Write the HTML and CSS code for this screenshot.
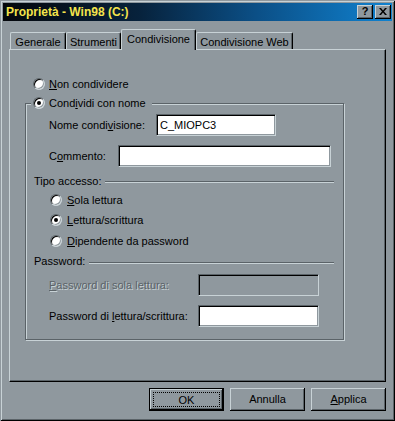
FILE: index.html
```html
<!DOCTYPE html>
<html lang="it">
<head>
<meta charset="utf-8">
<title>Proprietà - Win98 (C:)</title>
<link rel="stylesheet" href="styles.css">
</head>
<body>
<div class="window">
  <div class="titlebar">
    <span class="title">Proprietà - Win98 (C:)</span>
    <div class="tb-buttons">
      <div class="tb-btn help">?</div>
      <div class="tb-btn close">
        <svg width="8" height="7" viewBox="0 0 8 7"><path d="M0 0h2l2 2.5L6 0h2L5 3.5 8 7H6L4 4.5 2 7H0l3-3.5z" fill="#000"/></svg>
      </div>
    </div>
  </div>

  <div class="tabs">
    <div class="tab t1">Generale</div>
    <div class="tab t2">Strumenti</div>
    <div class="tab t3 active">Condivisione</div>
    <div class="tab t4">Condivisione Web</div>
  </div>

  <div class="panel">
    <div class="opt top-opt"><span class="radio"></span><span><u>N</u>on condividere</span></div>

    <div class="group">
      <div class="legend"><span class="radio checked"></span><span>Cond<u>i</u>vidi con nome</span></div>

      <div class="row r-name">
        <span class="lbl w-name">Nome condi<u>v</u>isione:</span>
        <div class="edit e-name">C_MIOPC3</div>
      </div>

      <div class="row r-comm">
        <span class="lbl w-comm">C<u>o</u>mmento:</span>
        <div class="edit e-comm"></div>
      </div>

      <div class="sep s-tipo"><span>Tipo accesso:</span><span class="line"></span></div>

      <div class="ropt ro1"><span class="radio"></span><span><u>S</u>ola lettura</span></div>
      <div class="ropt"><span class="radio checked"></span><span><u>L</u>ettura/scrittura</span></div>
      <div class="ropt ro3"><span class="radio"></span><span><u>D</u>ipendente da password</span></div>

      <div class="sep s-pwd"><span>Password:</span><span class="line"></span></div>

      <div class="row r-p1">
        <span class="lbl w-pwd dis"><u>P</u>assword di sola lettura:</span>
        <div class="edit e-pwd disabled"></div>
      </div>

      <div class="row r-p2">
        <span class="lbl w-pwd">Password di <u>l</u>ettura/scrittura:</span>
        <div class="edit e-pwd"></div>
      </div>
    </div>
  </div>

  <div class="buttons">
    <div class="btn default"><span class="focus">OK</span></div>
    <div class="btn"><span class="cap">Annulla</span></div>
    <div class="btn"><span class="cap"><u>A</u>pplica</span></div>
  </div>
</div>
</body>
</html>
```

FILE: styles.css
```css
* { box-sizing: border-box; }

html, body {
  margin: 0;
  background: #8f989e;
}

body {
  font-family: "Liberation Sans", Arial, sans-serif;
  font-size: 11px;
  color: #000;
}

u { text-decoration: underline; text-underline-offset: 1px; }

.window {
  width: 395px;
  height: 421px;
  padding: 3px;
  background: #8f989e;
  box-shadow:
    inset 1px 1px 0 #8f989e,
    inset -1px -1px 0 #000,
    inset 2px 2px 0 #c8d2d6,
    inset -2px -2px 0 #5b6368;
}

/* Title bar */
.titlebar {
  height: 18px;
  display: flex;
  align-items: center;
  justify-content: space-between;
  padding: 0 1px 0 3px;
  background: linear-gradient(to right, #04070b 0%, #07223c 35%, #0b4f86 65%, #1082d0 100%);
}

.title {
  color: #f4e44c;
  font-weight: bold;
  font-size: 12px;
  letter-spacing: 0;
}

.tb-buttons {
  display: flex;
  gap: 2px;
}

.tb-btn {
  width: 16px;
  height: 14px;
  background: #8f989e;
  display: flex;
  align-items: center;
  justify-content: center;
  box-shadow:
    inset -1px -1px 0 #000,
    inset 1px 1px 0 #c8d2d6,
    inset -2px -2px 0 #5b6368;
  font-weight: bold;
  font-size: 11px;
  line-height: 1;
}

.tb-btn.help { padding-bottom: 1px; }
.tb-btn.close { padding-bottom: 1px; }

/* Tabs */
.tabs {
  height: 28px;
  display: flex;
  align-items: flex-end;
  padding-left: 7px;
}

.tab {
  height: 17px;
  display: flex;
  align-items: center;
  justify-content: center;
  border-top: 1px solid #c8d2d6;
  border-left: 1px solid #c8d2d6;
  border-right: 1px solid #000;
  box-shadow: inset -1px 0 0 #5b6368;
  border-radius: 2px 2px 0 0;
  background: #8f989e;
  padding-top: 1px;
}

.t1 { width: 56px; }
.t2 { width: 55px; }
.t3 { width: 75px; }
.t4 { width: 97px; }

.tab.active {
  height: 21px;
  margin-bottom: -1px;
  padding-top: 0;
  padding-bottom: 3px;
  position: relative;
  z-index: 1;
}

/* Panel */
.panel {
  margin-left: 6px;
  width: 377px;
  height: 333px;
  border-top: 1px solid #c8d2d6;
  border-left: 1px solid #c8d2d6;
  border-right: 1px solid #000;
  border-bottom: 1px solid #000;
  box-shadow: inset -1px -1px 0 #5b6368;
  padding-top: 27px;
  display: flex;
  flex-direction: column;
  align-items: flex-start;
}

.opt {
  height: 14px;
  display: flex;
  align-items: center;
  gap: 4px;
}

.top-opt { padding-left: 23px; }

/* Radio */
.radio {
  width: 12px;
  height: 12px;
  flex: none;
  border-radius: 50%;
  background: #fff;
  border: 1px solid;
  border-color: #5b6368 #c8d2d6 #c8d2d6 #5b6368;
  box-shadow: inset 1px 1px 0 #000, inset -1px -1px 0 #8f989e;
  display: flex;
  align-items: center;
  justify-content: center;
}

.radio.checked::after {
  content: "";
  width: 4px;
  height: 4px;
  border-radius: 50%;
  background: #000;
}

/* Group box */
.group {
  margin: 12px 0 0 15px;
  width: 319px;
  height: 237px;
  border: 1px solid #5b6368;
  box-shadow: inset 1px 1px 0 #c8d2d6, 1px 1px 0 #c8d2d6;
  display: flex;
  flex-direction: column;
  align-items: flex-start;
}

.legend {
  margin: -8px 0 0 5px;
  height: 14px;
  padding: 0 6px 0 2px;
  background: #8f989e;
  display: flex;
  align-items: center;
  gap: 4px;
}

.row {
  height: 22px;
  display: flex;
  align-items: center;
  padding-left: 23px;
}

.r-name { margin-top: 4px; }
.r-comm { margin-top: 9px; }
.r-p1 { margin-top: 6px; }
.r-p2 { margin-top: 9px; }

.lbl { flex: none; }
.w-name { width: 107px; }
.w-comm { width: 69px; }
.w-pwd { width: 149px; }

.dis {
  color: #5b6368;
  text-shadow: 1px 1px 0 #c8d2d6;
}

.edit {
  height: 22px;
  background: #fff;
  border-top: 1px solid #5b6368;
  border-left: 1px solid #5b6368;
  border-right: 1px solid #c8d2d6;
  border-bottom: 1px solid #c8d2d6;
  box-shadow: inset 1px 1px 0 #000, inset -1px -1px 0 #8f989e;
  padding: 0 2px 0 3px;
  display: flex;
  align-items: center;
}

.e-name { width: 120px; }
.e-comm { width: 213px; }
.e-pwd { width: 121px; }
.edit.disabled { background: #8f989e; }

/* Separators */
.sep {
  align-self: stretch;
  height: 14px;
  display: flex;
  align-items: center;
  padding: 0 9px 0 8px;
  gap: 4px;
}

.sep .line {
  flex: 1;
  align-self: flex-start;
  margin-top: 7px;
  height: 2px;
  border-top: 1px solid #5b6368;
  border-bottom: 1px solid #c8d2d6;
}

.s-tipo { margin-top: 7px; }
.s-pwd { margin-top: 3px; }
.s-pwd .line { margin-top: 8px; }

.ropt {
  height: 20px;
  display: flex;
  align-items: center;
  gap: 5px;
  padding-left: 24px;
}

.ro1 { margin-top: 2px; }
.ro3 { height: 21px; }

/* Buttons */
.buttons {
  margin: 6px 0 0 6px;
  width: 377px;
  display: flex;
  justify-content: flex-end;
  gap: 6px;
}

.btn {
  width: 75px;
  height: 23px;
  background: #8f989e;
  box-shadow:
    inset -1px -1px 0 #000,
    inset 1px 1px 0 #c8d2d6,
    inset -2px -2px 0 #5b6368;
  display: flex;
  align-items: center;
  justify-content: center;
  padding: 4px;
}

.btn.default {
  box-shadow:
    inset 0 0 0 1px #000,
    inset -2px -2px 0 #000,
    inset 2px 2px 0 #c8d2d6,
    inset -3px -3px 0 #5b6368;
}

.btn .cap { padding-bottom: 1px; }

.focus {
  flex: 1;
  align-self: stretch;
  border: 1px dotted #000;
  display: flex;
  align-items: center;
  justify-content: center;
}
```
